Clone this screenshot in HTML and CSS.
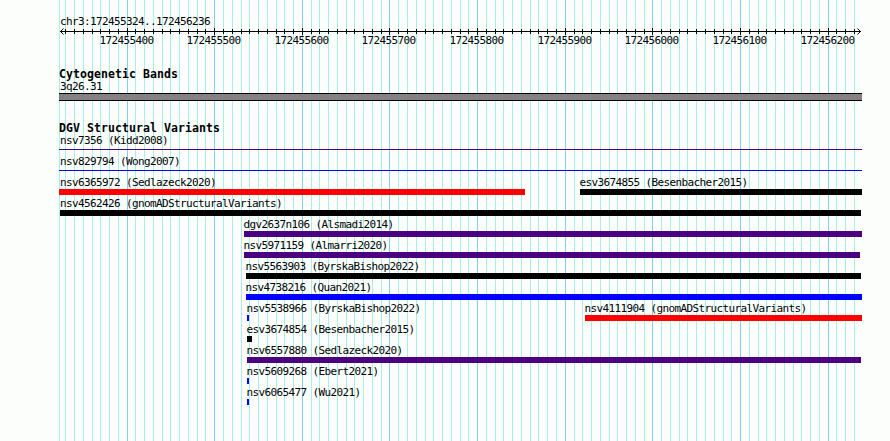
FILE: index.html
```html
<!DOCTYPE html>
<html lang="en">
<head>
    <meta charset="UTF-8">
    <meta name="viewport" content="width=device-width, initial-scale=1.0">
    <title>chr3:172455324..172456236</title>
    <link rel="stylesheet" href="styles.css">
</head>
<body>
    <div id="browser">
        <svg id="grid" width="803" height="441" shape-rendering="crispEdges"></svg>
        <div id="tracks">
            <div class="region">chr3:172455324..172456236</div>
            <svg id="axis" width="803" height="22"></svg>

            <h2>Cytogenetic Bands</h2>
            <div class="label first">3q26.31</div>
            <div class="band"></div>

            <h2>DGV Structural Variants</h2>
            <div id="variants"></div>
        </div>
    </div>
    <script src="script.js"></script>
</body>
</html>
```

FILE: styles.css
```css
*{
    margin: 0;
    padding: 0;
    box-sizing: border-box;
}
body{
    height: 441px;
    overflow: hidden;
    background-color: #fcfefc;
    color: #000;
    font-family: 'DejaVu Sans Mono', monospace;
    font-size: 11px;
    line-height: 12px;
    letter-spacing: -0.622px;
}
#browser{
    position: relative;
    width: 803px;
    height: 441px;
    margin-left: 59px;
}
#grid{
    position: absolute;
    top: 0;
    left: 0;
}
#tracks{
    position: relative;
    padding-top: 15px;
}
.region, .label{
    height: 12px;
    line-height: 14px;
    white-space: nowrap;
}
.region, .first{
    padding-left: 1px;
}
#axis{
    display: block;
    overflow: visible;
}
#axis path{
    fill: none;
    stroke: #000;
}
h2{
    height: 12px;
    margin-top: 19px;
    font-size: 11.5px;
    line-height: 12px;
    letter-spacing: 0.077px;
    white-space: nowrap;
}
.band{
    height: 8px;
    margin: 1px 0 21px;
    border-top: 1px solid #000;
    border-bottom: 1px solid #000;
    background-color: #848084;
}
.minor{
    fill: #acecec;
}
.major{
    fill: #84ceec;
}
.row{
    display: flex;
    height: 21px;
}
.feature{
    flex-shrink: 0;
}
.feature .label{
    margin-left: -0.6px;
}
.feature.edge .label{
    margin-left: 1px;
}
.feature.inset .label{
    margin-left: 0;
}
.bar{
    height: 6px;
    margin-top: 1px;
}
.line .bar{
    height: 1px;
    margin-top: 3px;
}
.indigo{
    background-color: #4b0082;
}
.blue{
    background-color: #0000ff;
}
.red{
    background-color: #ff0000;
}
.black{
    background-color: #000;
}
```

FILE: script.js
```js
var scale = 0.8764;

// pixel column of a base position, counted from the left edge of the panel
function column(pos){
    return Math.floor(68.07 + (pos - 172455400) * scale);
}

function drawGrid(){
    var clutter = '<rect class="minor" x="0" y="0" width="1" height="441"/>';
    for(var pos = 172455330; pos <= 172456230; pos += 10){
        var type = pos % 100 === 0 ? "major" : "minor";
        clutter += `<rect class="${type}" x="${column(pos)}" y="0" width="1" height="441"/>`;
    }
    document.querySelector("#grid").innerHTML = clutter;
}

function drawAxis(){
    var d = "M1 4.5H802";
    var labels = "";
    for(var pos = 172455330; pos <= 172456230; pos += 10){
        var x = column(pos);
        if(pos % 100 === 0){
            d += `M${x + 0.5} 1V8`;
            labels += `<text x="${x - 27.6}" y="17">${pos}</text>`;
        }
        else{
            d += `M${x + 0.5} 2V7`;
        }
    }
    d += "M4.5 1.5L1.5 4.5L4.5 7.5M798.5 1.5L801.5 4.5L798.5 7.5";
    document.querySelector("#axis").innerHTML = `<path d="${d}"/>` + labels;
}

// name, start, end, colour, extra classes
var rows = [
    [["nsv7356 (Kidd2008)", 0, 803, "indigo", "edge line"]],
    [["nsv829794 (Wong2007)", 0, 803, "blue", "edge line"]],
    [["nsv6365972 (Sedlazeck2020)", 0, 466, "red", "edge"], ["esv3674855 (Besenbacher2015)", 521, 803, "black"]],
    [["nsv4562426 (gnomADStructuralVariants)", 1, 802, "black", "inset"]],
    [["dgv2637n106 (Alsmadi2014)", 185, 803, "indigo"]],
    [["nsv5971159 (Almarri2020)", 185, 801, "indigo"]],
    [["nsv5563903 (ByrskaBishop2022)", 187, 802, "black"]],
    [["nsv4738216 (Quan2021)", 187, 803, "blue"]],
    [["nsv5538966 (ByrskaBishop2022)", 188, 190, "blue"], ["nsv4111904 (gnomADStructuralVariants)", 526, 803, "red"]],
    [["esv3674854 (Besenbacher2015)", 188, 193, "black"]],
    [["nsv6557880 (Sedlazeck2020)", 188, 802, "indigo"]],
    [["nsv5609268 (Ebert2021)", 188, 190, "blue"]],
    [["nsv6065477 (Wu2021)", 188, 190, "blue"]]
];

function drawVariants(){
    var clutter = "";
    rows.forEach(function(row){
        var end = 0;
        clutter += '<div class="row">';
        row.forEach(function(f){
            clutter += `<div class="feature ${f[4] || ""}" style="margin-left:${f[1] - end}px;width:${f[2] - f[1]}px">
                <div class="label">${f[0]}</div>
                <div class="bar ${f[3]}"></div>
            </div>`;
            end = f[2];
        });
        clutter += "</div>";
    });
    document.querySelector("#variants").innerHTML = clutter;
}

drawGrid();
drawAxis();
drawVariants();
```
